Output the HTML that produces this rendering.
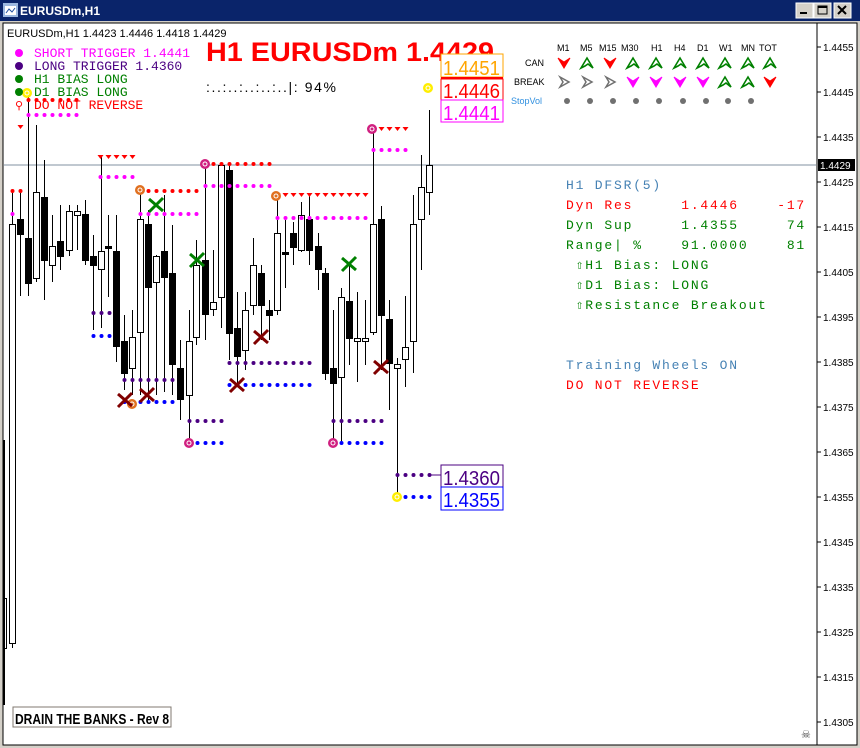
<!DOCTYPE html>
<html><head><meta charset="utf-8"><style>
html,body{margin:0;padding:0;background:#d4d0c8;width:860px;height:748px;overflow:hidden}
svg{display:block}
text{font-family:"Liberation Sans",sans-serif}
text.m,.m text{font-family:"Liberation Mono",monospace;font-size:13px}
.p text{letter-spacing:1.8px}
</style></head><body>
<svg id="s" width="860" height="748" xmlns="http://www.w3.org/2000/svg">
<rect x="0" y="0" width="860" height="748" fill="#d4d0c8"/>
<rect x="0" y="0" width="860" height="21" fill="#0a246a"/>
<rect x="3" y="3" width="15" height="14" fill="#9cb8e0"/><rect x="5" y="6" width="11" height="9" fill="#fff"/><path d="M6 13 L9 9 L12 12 L15 8" stroke="#2050a0" fill="none"/>
<text x="20" y="15" fill="#fff" font-weight="bold" font-size="12">EURUSDm,H1</text>
<g>
<rect x="796" y="3" width="17" height="15" fill="#d4d0c8" stroke="#fff"/><rect x="800" y="12" width="7" height="2" fill="#000"/>
<rect x="814" y="3" width="17" height="15" fill="#d4d0c8" stroke="#fff"/><rect x="818" y="6" width="9" height="8" fill="none" stroke="#000"/><rect x="818" y="6" width="9" height="2" fill="#000"/>
<rect x="834" y="3" width="17" height="15" fill="#d4d0c8" stroke="#fff"/><path d="M838 6 L846 14 M846 6 L838 14" stroke="#000" stroke-width="2"/>
</g>
<rect x="3" y="23" width="854" height="722" fill="#fff" stroke="#000"/>
<line x1="817" y1="23" x2="817" y2="745" stroke="#000"/>
<line x1="4" y1="165" x2="816" y2="165" stroke="#8090a0"/>
<g id="c"></g>
<text x="7" y="37" font-size="11">EURUSDm,H1  1.4423 1.4446 1.4418 1.4429</text>
<circle cx="19" cy="53" r="4" fill="#ff00ff"/><circle cx="19" cy="66" r="4" fill="#4b0082"/><circle cx="19" cy="79" r="4" fill="#008000"/><circle cx="19" cy="92" r="4" fill="#008000"/>
<text x="15" y="109" fill="#f00" font-size="11">⚲</text>
<text class="m" x="34" y="57" fill="#ff00ff">SHORT TRIGGER 1.4441</text>
<text class="m" x="34" y="70" fill="#4b0082">LONG TRIGGER  1.4360</text>
<text class="m" x="34" y="83" fill="#008000">H1 BIAS LONG</text>
<text class="m" x="34" y="96" fill="#008000">D1 BIAS LONG</text>
<text class="m" x="34" y="109" fill="#f00">DO NOT REVERSE</text>
<text x="206" y="61" fill="#f00" font-weight="bold" font-size="27" textLength="288" lengthAdjust="spacingAndGlyphs">H1 EURUSDm 1.4429</text>
<text x="206" y="92" font-size="14" textLength="130">:..:..:..:..:..|:  94%</text>
<rect x="441" y="54" width="62" height="23" fill="#fff" stroke="#ffa500"/><text x="443" y="75" fill="#ffa500" font-size="20" textLength="57" lengthAdjust="spacingAndGlyphs">1.4451</text>
<rect x="441" y="77" width="62" height="2" fill="#f00"/>
<rect x="441" y="79" width="62" height="21" fill="#fff" stroke="#f00"/><text x="443" y="98" fill="#f00" font-size="20" textLength="57" lengthAdjust="spacingAndGlyphs">1.4446</text>
<rect x="441" y="100" width="62" height="22" fill="#fff" stroke="#ff00ff"/><text x="443" y="120" fill="#ff00ff" font-size="20" textLength="57" lengthAdjust="spacingAndGlyphs">1.4441</text>
<rect x="441" y="465" width="62" height="22" fill="#fff" stroke="#4b0082"/><text x="443" y="485" fill="#4b0082" font-size="20" textLength="57" lengthAdjust="spacingAndGlyphs">1.4360</text>
<rect x="441" y="487" width="62" height="23" fill="#fff" stroke="#0000ff"/><text x="443" y="507" fill="#0000ff" font-size="20" textLength="57" lengthAdjust="spacingAndGlyphs">1.4355</text>
<g font-size="9">
<text x="557" y="51">M1</text><text x="580" y="51">M5</text><text x="599" y="51">M15</text><text x="621" y="51">M30</text><text x="651" y="51">H1</text><text x="674" y="51">H4</text><text x="697" y="51">D1</text><text x="719" y="51">W1</text><text x="741" y="51">MN</text><text x="759" y="51">TOT</text>
<text x="525" y="66">CAN</text><text x="514" y="85">BREAK</text><text x="511" y="104" fill="#3090e0">StopVol</text>
</g>
<g class="m p">
<text x="566" y="189" fill="#4682b4">H1 DFSR(5)</text>
<text x="566" y="209" fill="#f00" xml:space="preserve">Dyn Res     1.4446    -17</text>
<text x="566" y="229" fill="#008000" xml:space="preserve">Dyn Sup     1.4355     74</text>
<text x="566" y="249" fill="#008000" xml:space="preserve">Range| %    91.0000    81</text>
<text x="566" y="269" fill="#008000" xml:space="preserve"> ⇧H1 Bias: LONG</text>
<text x="566" y="289" fill="#008000" xml:space="preserve"> ⇧D1 Bias: LONG</text>
<text x="566" y="309" fill="#008000" xml:space="preserve"> ⇧Resistance Breakout</text>
<text x="566" y="369" fill="#4682b4">Training Wheels ON</text>
<text x="566" y="389" fill="#f00">DO NOT REVERSE</text>
</g>
<g id="ax" font-size="10"></g>
<rect x="818" y="159" width="37" height="12" fill="#000"/><text x="820" y="169" fill="#fff" font-size="10">1.4429</text>
<rect x="13" y="707" width="158" height="20" fill="#fff" stroke="#807870"/>
<text x="15" y="724" font-weight="bold" font-size="15" textLength="154" lengthAdjust="spacingAndGlyphs" style="font-family:'Liberation Sans Narrow','Liberation Sans',sans-serif">DRAIN THE BANKS - Rev 8</text>
<text x="801" y="738" font-size="11" fill="#444">☠</text>
</svg>
<script>
var NS="http://www.w3.org/2000/svg",g=document.getElementById('c'),s=document.getElementById('s');
function el(t,a,p){var e=document.createElementNS(NS,t);for(var k in a)e.setAttribute(k,a[k]);(p||g).appendChild(e);return e;}
el('rect',{x:3,y:440,width:2,height:265,fill:'#000'});
el('rect',{x:4.5,y:598.5,width:2,height:50,fill:'#fff',stroke:'#000'});
var C=[[12,224,643,1,191,648],[20,219,234,0,191,296],[28,238,283,0,93,296],[36,192,278,1,125,282],[44,197,260,0,160,300],[52,246,265,1,215,282],[60,241,256,0,205,270],[69,211,250,1,205,256],[77,211,215,1,205,250],[85,214,260,0,200,265],[93,256,265,0,235,330],[101,251,269,1,155,328],[108,246,248,0,215,297],[116,251,346,0,215,362],[124,341,373,0,315,390],[132,337,368,1,310,395],[140,219,332,1,190,395],[148,224,287,0,210,400],[156,256,282,1,255,395],[164,251,277,0,195,392],[172,273,364,0,225,395],[180,368,399,0,340,420],[189,341,395,1,310,443],[196,265,337,1,240,345],[205,260,314,0,164,340],[213,302,309,1,250,316],[221,165,297,1,165,328],[229,170,333,0,165,360],[237,328,356,0,292,385],[245,310,350,1,292,370],[253,265,305,1,238,315],[261,273,305,0,265,340],[269,310,315,0,300,340],[277,233,310,1,196,315],[285,252,254,0,220,288],[293,233,247,0,222,265],[301,215,250,1,202,252],[309,219,250,0,196,265],[318,246,269,0,233,290],[325,273,373,0,268,380],[333,368,383,0,310,443],[341,297,377,1,288,443],[349,301,338,0,265,365],[357,338,341,1,292,382],[365,338,341,1,300,365],[373,224,332,1,129,335],[381,219,315,0,206,370],[389,319,363,0,300,410],[397,364,368,1,358,497],[405,347,359,1,296,387],[413,224,341,1,195,373],[421,187,219,1,155,270],[429,165,192,1,110,215]];
C.forEach(function(c){var x=c[0];el('line',{x1:x+.5,y1:c[4],x2:x+.5,y2:c[5],stroke:'#000'});
el('rect',{x:x-2.5,y:c[1]+.5,width:6,height:Math.max(c[2]-c[1],2),fill:c[3]?'#fff':'#000',stroke:'#000'});});
function row(y,x1,x2,col,tri){for(var x=x1;x<=x2;x+=8){if(tri)el('path',{d:'M'+(x-2.5)+' '+(y-2)+'h6l-3 4z',fill:col});else el('circle',{cx:x+.5,cy:y,r:2,fill:col});}}
row(157,100,132,'#f00',1);row(177,100,132,'#ff00ff');row(191,140,200,'#f00');row(214,140,200,'#ff00ff');
row(164,205,270,'#f00');row(186,205,270,'#ff00ff');row(195,277,365,'#f00',1);row(218,277,365,'#ff00ff');
row(129,373,405,'#f00',1);row(150,373,405,'#ff00ff');row(115,28,76,'#ff00ff');row(100,28,76,'#f00');
row(191,12,20,'#f00');row(214,12,12,'#ff00ff');row(127,20,20,'#f00',1);
row(313,93,110,'#4b0082');row(336,93,110,'#0000ff');row(380,124,172,'#4b0082');row(402,124,172,'#0000ff');
row(363,229,310,'#4b0082');row(385,229,310,'#0000ff');row(421,189,221,'#4b0082');row(443,189,221,'#0000ff');
row(421,333,381,'#4b0082');row(443,333,381,'#0000ff');row(475,397,430,'#4b0082');row(497,397,430,'#0000ff');
el('line',{x1:430,y1:475,x2:441,y2:475,stroke:'#4b0082'});
[[140,190,'#e07020'],[276,196,'#e07020'],[132,404,'#e07020'],[205,164,'#d02080'],[372,129,'#d02080'],[189,443,'#d02080'],[333,443,'#d02080'],[397,497,'#ffee00'],[428,88,'#ffee00'],[27,93,'#ffee00']].forEach(function(m){el('circle',{cx:m[0],cy:m[1],r:5,fill:m[2]});el('circle',{cx:m[0],cy:m[1],r:2,fill:'none',stroke:'#fff'});});
function X(x,y,col){el('path',{d:'M'+(x-7)+' '+(y-6)+'L'+(x+7)+' '+(y+6)+'M'+(x+7)+' '+(y-7)+'L'+(x-7)+' '+(y+7),stroke:col,'stroke-width':3});}
X(156,205,'#008000');X(197,260,'#008000');X(349,264,'#008000');
X(125,400,'#800000');X(147,395,'#800000');X(237,385,'#800000');X(261,337,'#800000');X(381,367,'#800000');
var cols=[564,587,610,633,656,680,703,725,748,770];
function up(x,y,c){el('path',{d:'M'+(x-6)+' '+(y+5)+'L'+x+' '+(y-5)+'L'+(x+6)+' '+(y+5)+'L'+(x+1)+' '+(y+1)+'L'+(x-2)+' '+(y+3)+'Z',fill:'none',stroke:c,'stroke-width':1.6});}
function dn(x,y,c){el('path',{d:'M'+(x-6)+' '+(y-5)+'L'+x+' '+(y+5)+'L'+(x+6)+' '+(y-5)+'L'+x+' '+(y-1)+'Z',fill:c,stroke:c,'stroke-width':1});}
function rt(x,y,c){el('path',{d:'M'+(x-4)+' '+(y-5)+'L'+(x+5)+' '+y+'L'+(x-4)+' '+(y+5)+'L'+(x-1)+' '+y+'Z',fill:'none',stroke:c,'stroke-width':1.5});}
var can='rgrggggggg',brk='xxxmmmmggr';
cols.forEach(function(x,i){var a=can[i];if(a=='r')dn(x,63,'#f00');else up(x,63,'#008000');
var b=brk[i];if(b=='x')rt(x,82,'#707070');else if(b=='m')dn(x,82,'#ff00ff');else if(b=='r')dn(x,82,'#f00');else up(x,82,'#008000');
if(i<9)el('circle',{cx:x+3,cy:101,r:3,fill:'#707070'});});
var ax=document.getElementById('ax');
for(var i=0;i<16;i++){var y=47+i*45,p=(1.4455-i*0.001).toFixed(4);el('line',{x1:817,y1:y,x2:821,y2:y,stroke:'#000'},ax);var t=el('text',{x:823,y:y+4},ax);t.textContent=p;}
</script>
</body></html>
